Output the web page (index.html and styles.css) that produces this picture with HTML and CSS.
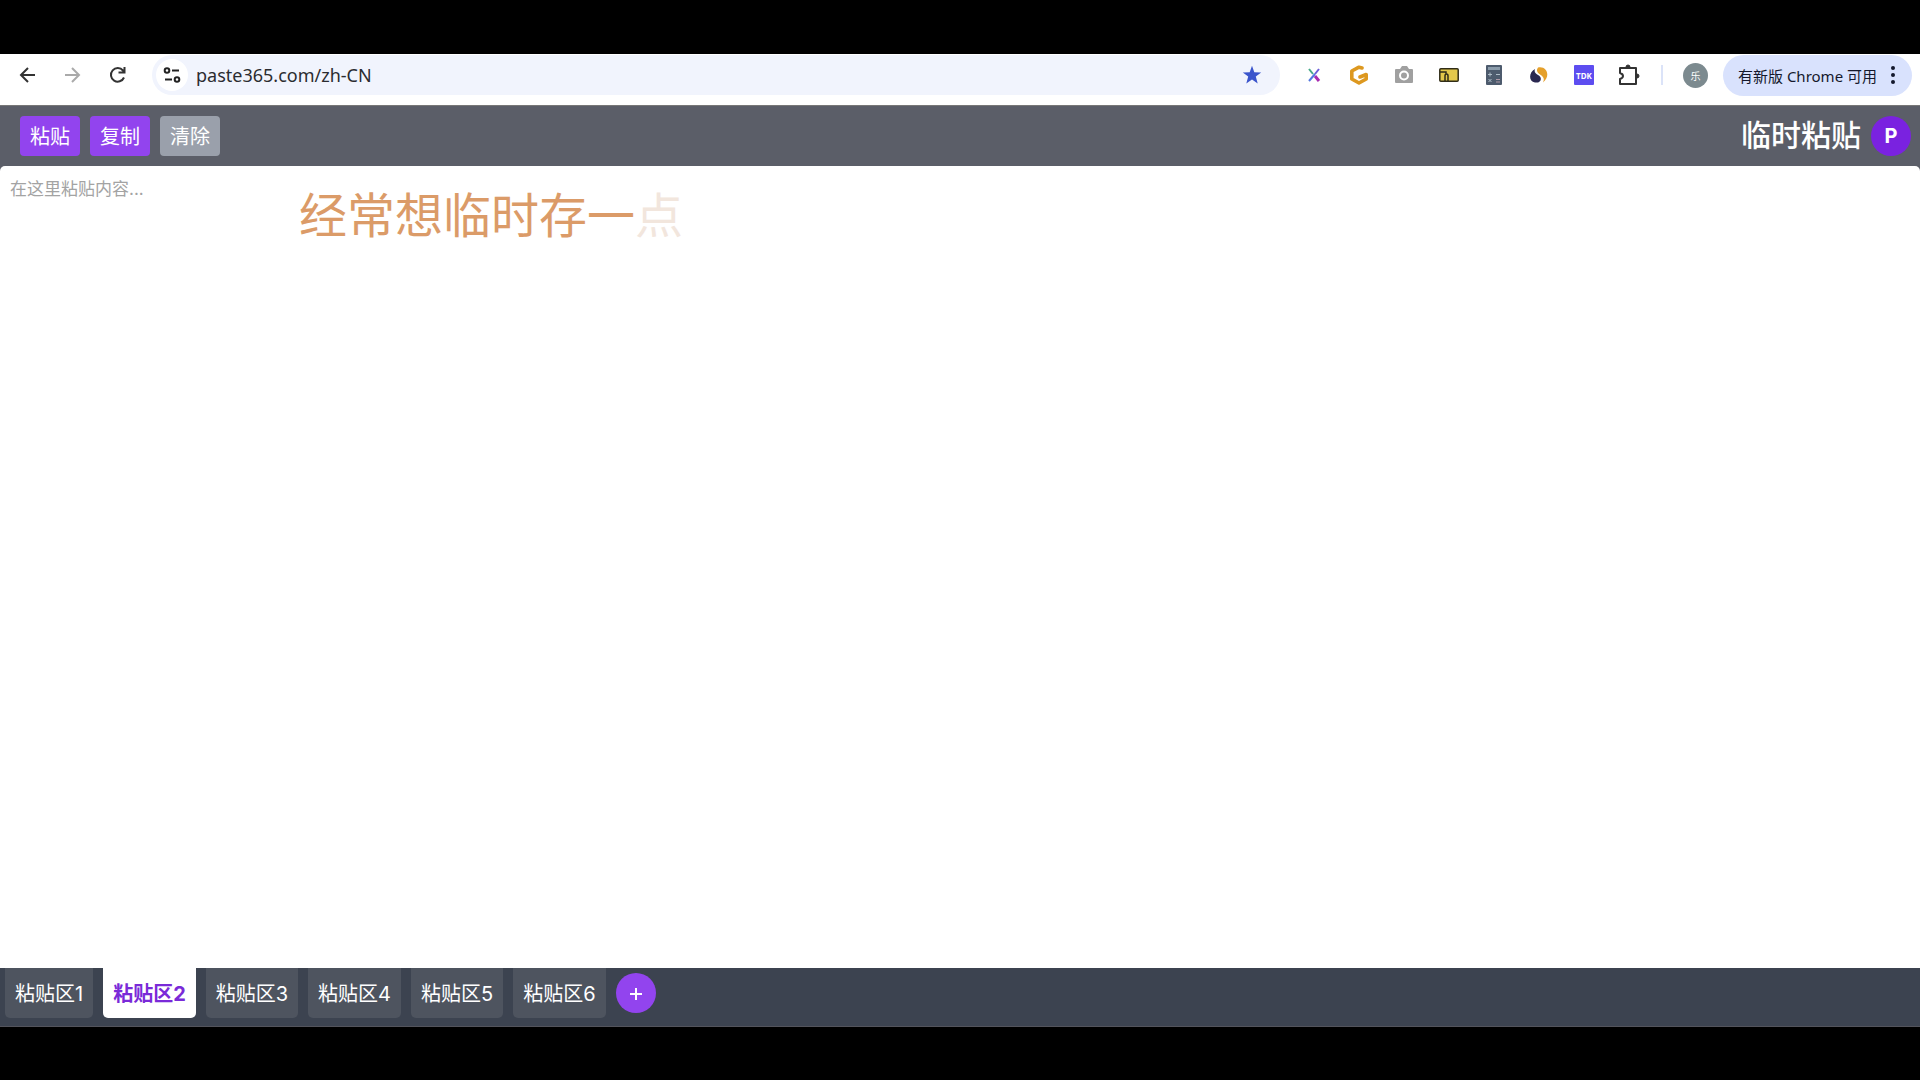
FILE: index.html
```html
<!DOCTYPE html>
<html lang="zh-CN">
<head>
<meta charset="utf-8">
<title>临时粘贴</title>
<link rel="stylesheet" href="styles.css">
</head>
<body>
<div class="window">
  <header class="toolbar">
    <nav class="nav" aria-label="导航">
      <button class="icon-button" aria-label="后退"><svg width="20" height="20" viewBox="0 0 20 20"><path d="M17 10H3M10 3l-7 7 7 7" fill="none" stroke="currentColor" stroke-width="2"/></svg></button>
      <button class="icon-button icon-button--off" aria-label="前进"><svg width="20" height="20" viewBox="0 0 20 20"><path d="M2 10h14M9 3l7 7-7 7" fill="none" stroke="currentColor" stroke-width="2"/></svg></button>
      <button class="icon-button" aria-label="重新加载"><svg width="20" height="20" viewBox="0 0 20 20"><path d="M16 12.500A6.800 6.800 0 1 1 15 5.500L16.500 7M16.500 2v5.500h-6" fill="none" stroke="currentColor" stroke-width="2"/></svg></button>
    </nav>
    <div class="address">
      <button class="site-info" aria-label="网站信息"><svg width="18" height="16" viewBox="0 0 18 16" fill="none" stroke="#222" stroke-width="2"><circle cx="4" cy="3.500" r="2.300"/><path d="M9 3.500h7M2 12.500h7"/><circle cx="14" cy="12.500" r="2.300"/></svg></button>
      <input class="url" type="text" aria-label="网址" value="paste365.com/zh-CN">
      <button class="star" aria-label="书签"><svg width="20" height="20" viewBox="0 0 20 20"><path d="M10 .8l2.300 6.400 6.900.2-5.400 4.200 1.900 6.900L10 14.600l-5.700 3.900 1.900-6.900L.8 7.400l6.900-.2z" fill="#3b55cc"/></svg></button>
    </div>
    <div class="extensions">
      <button class="icon-button" aria-label="扩展 X"><svg width="20" height="20" viewBox="0 0 20 20" fill="none" stroke-width="2"><path d="M5 4l4 5" stroke="#45a889"/><path d="M15 4l-4 5" stroke="#6a5cd8"/><path d="M11 9l-6 7" stroke="#5277e0"/><path d="M11 11l4 5" stroke="#a82bb0" stroke-width="3"/></svg></button>
      <button class="icon-button" aria-label="扩展 G"><svg width="20" height="20" viewBox="0 0 20 20"><path d="M13 3L10 2.200 2.800 6v8l7.200 4 7.200-4V9.500L11 12" fill="none" stroke="#dd981f" stroke-width="3.600" stroke-linejoin="round" stroke-linecap="round"/></svg></button>
      <button class="icon-button" aria-label="截图"><svg width="20" height="20" viewBox="0 0 20 20"><path d="M2 4h4l2-3h5l2 3h3q1 0 1 1v12q0 1-1 1H2q-1 0-1-1V5q0-1 1-1z" fill="#a0a0a0"/><circle cx="10" cy="10.500" r="4" fill="#a0a0a0" stroke="#fff" stroke-width="2"/></svg></button>
      <button class="icon-button" aria-label="文件夹"><svg width="20" height="14" viewBox="0 0 20 14"><rect x=".8" y=".8" width="18.400" height="12.400" rx="1" fill="#e3c84a" stroke="#302c17" stroke-width="1.500"/><path d="M1 4h6v2M6 13V8q0-2 1.500-2T9 8v5" fill="none" stroke="#302c17" stroke-width="1.500"/></svg></button>
      <button class="icon-button" aria-label="计算器"><svg width="18" height="20" viewBox="0 0 18 20"><rect x="1" width="16" height="20" rx="1" fill="#4d5b6d"/><path d="M3 2h12v3H3z" fill="#8b9cab"/><path d="M3 9.500h4M5 7.500v4M11 9.500h4M3.500 14l3 3M6.500 14l-3 3" stroke="#aebdc8"/><path d="M11 14.500h4M11 17h4" stroke="#b09aa8"/></svg></button>
      <button class="icon-button" aria-label="流量分析"><svg width="20" height="20" viewBox="0 0 20 20"><path d="M6 4C0 7-1 16 6 17.500c6 1 8-5 3-7.500C6 8.500 5 6.500 6 4z" fill="#2a2850"/><path d="M9 2.500c9-2 13 9 5 15 2-4 0-6-3-8-3-2-4-4-2-7z" fill="#e5a02b"/></svg></button>
      <button class="icon-button tdk">TDK</button>
      <button class="icon-button" aria-label="扩展程序"><svg width="22" height="22" viewBox="0 0 22 22"><path d="M2 4h16v16H2v-5q3-1 3-3t-3-3z" fill="none" stroke="#333" stroke-width="2" stroke-linejoin="round"/><path d="M8 3a2 2 0 0 1 4 0zM19 10a2 2 0 0 1 0 4z" fill="#333" stroke="#333"/></svg></button>
    </div>
    <span class="divider"></span>
    <button class="profile">乐</button>
    <button class="update">有新版 Chrome 可用<svg width="4" height="18" viewBox="0 0 4 18" fill="#14182c"><circle cx="2" cy="2" r="2"/><circle cx="2" cy="9" r="2"/><circle cx="2" cy="16" r="2"/></svg></button>
  </header>
  <div class="app-bar">
    <button class="action">粘贴</button>
    <button class="action">复制</button>
    <button class="action action--clear">清除</button>
    <h1 class="title">临时粘贴</h1>
    <a class="logo" href="#">P</a>
  </div>
  <main class="editor">
    <textarea class="paste" aria-label="粘贴内容" placeholder="在这里粘贴内容..."></textarea>
    <p class="caption">经常想临时存一<span class="caption-next">点</span></p>
  </main>
  <footer class="tabs">
    <button class="tab">粘贴区1</button>
    <button class="tab tab--active">粘贴区2</button>
    <button class="tab">粘贴区3</button>
    <button class="tab">粘贴区4</button>
    <button class="tab">粘贴区5</button>
    <button class="tab">粘贴区6</button>
    <button class="add" aria-label="添加"><svg width="14" height="14" viewBox="0 0 14 14"><path d="M7 1v12M1 7h12" stroke="#fff" stroke-width="2"/></svg></button>
  </footer>
</div>
</body>
</html>
```
FILE: styles.css
```css
* { box-sizing: border-box; }
body { margin: 0; background: #000; font-family: Inter, "Noto Sans CJK SC", sans-serif; }
button, input, textarea { font: inherit; border: 0; padding: 0; margin: 0; background: none; }
button { display: flex; align-items: center; justify-content: center; flex: none; }
svg { display: block; }
.window { display: flex; flex-direction: column; height: 100vh; padding: 54px 0 53px; }
.toolbar { display: flex; align-items: center; height: 51px; padding: 0 8px 9px 14px; background: #fff; font-family: "Noto Sans", "Noto Sans CJK SC", sans-serif; flex: none; }
.nav { display: flex; gap: 17px; }
.icon-button { width: 28px; height: 28px; color: #333; }
.icon-button--off { color: #aaa; }
.address { display: flex; align-items: center; flex: 1; height: 40px; margin-left: 20px; padding: 0 18px 0 4px; background: #f1f4fd; border-radius: 20px; }
.site-info { width: 32px; height: 32px; border-radius: 50%; background: #fff; }
.url { flex: 1; min-width: 0; margin-left: 8px; font-size: 18px; color: #2b2c30; }
.extensions { display: flex; gap: 17px; margin-left: 20px; }
.tdk { width: 20px; height: 20px; align-self: center; margin: 0 4px; border-radius: 1px; background: #5d4df0; color: #fff; font-size: 8px; font-weight: 700; }
.divider { width: 2px; height: 20px; margin: 0 20px 0 18px; background: #dbe3f8; }
.profile { width: 25px; height: 25px; border-radius: 50%; background: #7c8a8f; color: #fff; font-size: 10px; }
.update { gap: 14px; height: 41px; margin-left: 15px; padding: 0 17px 0 15px; border-radius: 21px; background: #d9e2fd; color: #14182c; font-size: 15px; }
.app-bar { display: flex; align-items: center; gap: 10px; height: 61px; padding: 0 9px 0 20px; background: #5b5e68; border-top: 1px solid #777; flex: none; color: #fff; }
.action { height: 40px; padding: 0 10px 2px; border-radius: 4px; background: #9244ee; color: #fff; font-size: 20px; }
.action--clear { background: #9aa0ab; }
.title { margin: 0 0 0 auto; padding-bottom: 2px; font-size: 30px; line-height: 40px; font-weight: 500; }
.logo { display: flex; align-items: center; justify-content: center; width: 40px; height: 40px; border-radius: 50%; background: #7a22e0; color: #fff; font-size: 20px; font-weight: 700; text-decoration: none; }
.editor { position: relative; display: flex; flex: 1; background: #5b5e68; }
.paste { flex: 1; padding: 10px; resize: none; outline: none; background: #fff; border-radius: 5px 5px 0 0; font-size: 17px; line-height: 26px; }
.paste::placeholder { color: #a3a3a3; }
.caption { position: absolute; left: 299px; top: 14px; margin: 0; font-family: "Noto Sans CJK SC", sans-serif; font-size: 48px; line-height: 64px; color: #db9b68; }
.caption-next { color: #f2e6dd; }
.tabs { display: flex; align-items: flex-start; gap: 10px; height: 59px; padding: 0 5px; background: #3c4350; border-bottom: 1px solid #53545c; flex: none; }
.tab { height: 50px; padding: 0 10px 2px; border-radius: 0 0 5px 5px; background: #4e545f; color: #fff; font-size: 20px; }
.tab--active { background: #fff; color: #7a2ad8; font-weight: 700; }
.add { width: 40px; height: 40px; margin-top: 5px; padding-top: 2px; border-radius: 50%; background: #9244ee; }
```
